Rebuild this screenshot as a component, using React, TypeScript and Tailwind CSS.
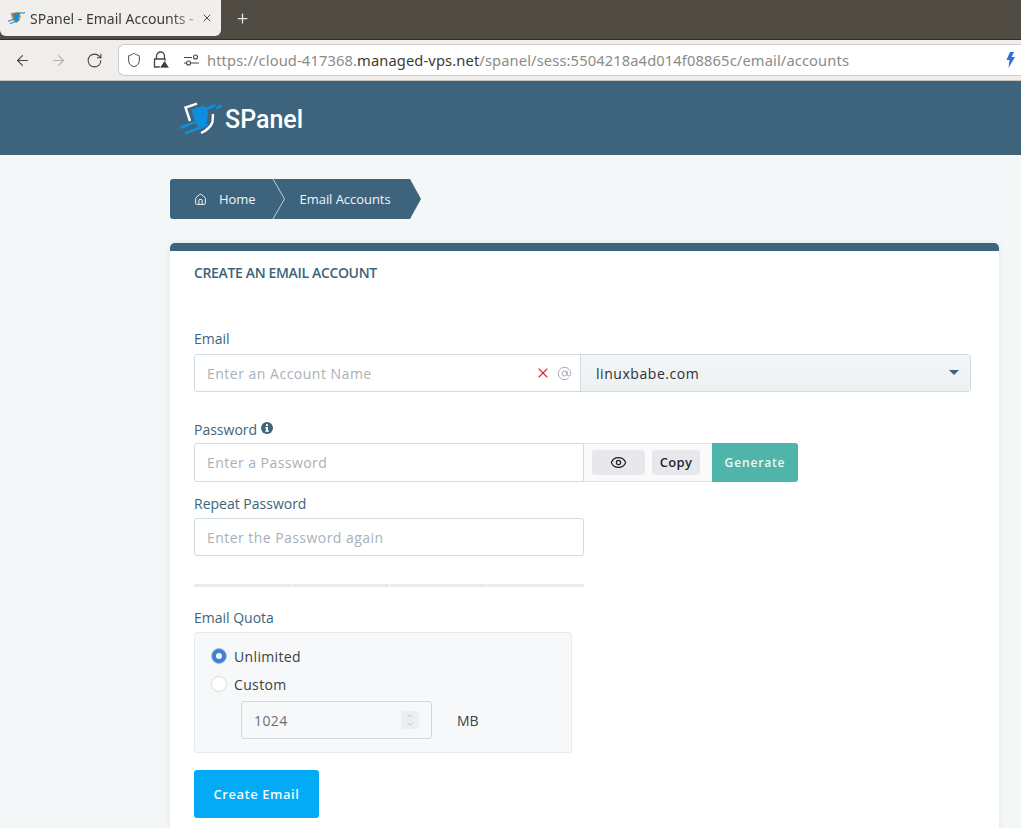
import React from 'react';
import { ArrowLeft, ArrowRight, RotateCw, Shield, X, Plus, Eye, AtSign, ChevronUp, ChevronDown, Home } from 'lucide-react';

const Logo = ({ width, favicon }: { width: number; favicon?: boolean }) => (
  <svg width={width} height={width * 33 / 42} viewBox="0 0 42 33" fill="none">
    {favicon && <path d="M6 5 L28 2 L32 14 Q30 24 21 30 Q12 26 9 16 Z" fill="#f08a2c" />}
    {!favicon && <path d="M10 19 L5.5 5.5 L17 1.7 M33 12 L32.5 20 Q30 27 21 31" stroke="#ffffff" strokeWidth="2.4" fill="none" />}
    <path d="M11.5 7.5 L24 3.5 L28 10 L27 20 Q24.5 25 19 27.5 L15 19 Z" fill="#0d8fdc" />
    <path d="M22 9 L34 3.5" stroke="#0d8fdc" strokeWidth="2.8" strokeLinecap="round" />
    <path d="M37 6 L41 4" stroke="#0d8fdc" strokeWidth="2.8" strokeLinecap="round" />
    <path d="M1 25.5 L20 18" stroke="#0d8fdc" strokeWidth="2.8" strokeLinecap="round" />
    <path d="M6 31 L27 23" stroke="#0d8fdc" strokeWidth="2.8" strokeLinecap="round" />
  </svg>
);

const BrowserChrome = () => (
  <div className="font-['Noto_Sans',sans-serif]">
    <div className="flex h-10 items-start bg-[#504c43] border-b border-[#2f2d28]">
      <div className="flex h-9 w-[221px] items-center rounded-b-md bg-[#f1efed] pl-2 pr-2">
        <Logo width={17} favicon />
        <span className="ml-[5px] w-[166px] whitespace-nowrap text-[14px] text-[#3d3c38] [mask-image:linear-gradient(to_right,black_84%,rgba(0,0,0,0.35)_100%)]">SPanel - Email Accounts -</span>
        <X size={12} className="ml-auto text-[#4a4946]" />
      </div>
      <Plus size={15} className="ml-[14px] mt-[11px] text-[#e8e6e3]" />
    </div>
    <div className="flex h-[41px] items-center border-b border-[#c9c5c0] bg-[#f0eeec] pl-[14px]">
      <ArrowLeft size={17} strokeWidth={1.5} className="text-[#46443f]" />
      <ArrowRight size={17} strokeWidth={1.5} className="ml-[19px] text-[#b2b0ad]" />
      <RotateCw size={17} strokeWidth={1.5} className="ml-[19px] text-[#46443f]" />
      <div className="ml-[15px] flex h-[32px] flex-1 items-center rounded-l-md border border-r-0 border-[#d0ccc6] bg-white pl-[7px]">
        <Shield size={16} strokeWidth={1.5} className="text-[#46443f]" />
        <div className="relative ml-[11px] h-[18px] w-[17px]">
          <svg width="17" height="18" viewBox="0 0 17 18" fill="none">
            <path d="M3.5 8 V5 a4 4 0 0 1 8 0 V8 M1.5 8 H12 V16 H1.5 Z" stroke="#46443f" strokeWidth="1.3" />
            <path d="M11.5 9.5 L16.5 17 H6.5 Z" fill="#3b3a36" stroke="#fff" strokeWidth="0.8" />
          </svg>
        </div>
        <svg width="15" height="12" viewBox="0 0 15 12" fill="none" className="ml-[14px]">
          <path d="M0 3.5 H8 M0 9 H2 M7 9 H15" stroke="#46443f" strokeWidth="1.2" />
          <circle cx="11.5" cy="3" r="2" stroke="#46443f" strokeWidth="1.1" />
          <circle cx="4.5" cy="9" r="2" stroke="#46443f" strokeWidth="1.1" />
        </svg>
        <span className="ml-[8px] whitespace-nowrap text-[14.7px] tracking-[0.12px] text-[#8c8b88]">
          https://cloud-417368.<span className="text-[#3c3b37]">managed-vps.net</span>/spanel/sess:5504218a4d014f08865c/email/accounts
        </span>
        <svg width="9" height="16" viewBox="0 0 9 16" className="ml-auto mr-[6px]">
          <path d="M4 0 L8 0 L5.5 5 L9 5 L2.5 16 L3.5 8 L0.5 8 Z" fill="#2f6fd6" />
        </svg>
      </div>
    </div>
  </div>
);

const Label = ({ children }: { children: React.ReactNode }) => (
  <label className="block text-[14px] leading-5 text-[#3d647c]">{children}</label>
);

const App = () => {
  return (
    <div className="h-[828px] w-[1021px] overflow-hidden bg-[#f4f7f8] font-['Open_Sans',sans-serif]">
      <BrowserChrome />

      <div className="flex h-[74px] items-center bg-[#3d647c] pl-[180px]">
        <Logo width={42} />
        <span className="ml-[3px] mt-[2px] font-['Roboto',sans-serif] text-[25px] font-medium leading-none text-white">SPanel</span>
      </div>

      <div className="pl-[170px] pr-[22px] pt-6">
        <div className="relative flex h-10 w-[251px] items-center rounded-l-[3px] bg-[#3d647c] pt-[1px] text-[13px] tracking-[-0.05px] text-[#f1f5f7] [clip-path:polygon(0_0,240px_0,251px_50%,240px_100%,0_100%)]">
          <Home size={13} strokeWidth={1.8} className="ml-6" />
          <span className="ml-[12px]">Home</span>
          <svg width="14" height="40" viewBox="0 0 14 40" fill="none" className="absolute left-[102px] top-0">
            <path d="M1 0 L12.5 20 L1 40" stroke="#dfe7ec" strokeWidth="0.8" />
          </svg>
          <span className="ml-[44px]">Email Accounts</span>
        </div>

        <div className="mt-6 h-[600px] rounded-t-[5px] border-t-8 border-[#3d647c] bg-white px-6 shadow-[0_0_6px_rgba(0,0,0,0.08)]">
          <h2 className="pt-[13px] text-[14px] font-semibold leading-[18px] tracking-[-0.35px] text-[#3d647c]">CREATE AN EMAIL ACCOUNT</h2>

          <div className="mt-[47px]">
            <Label>Email</Label>
            <div className="mt-[5px] flex h-[38px] w-[777px] rounded-[3px] border border-[#cfdce3] text-[14px]">
              <div className="flex w-[386px] items-center border-r border-[#cfdce3] pl-3 pr-[8px]">
                <span className="tracking-[0.5px] text-[#a8b1b9]">Enter an Account Name</span>
                <X size={16} strokeWidth={1.7} className="ml-auto text-[#e0242c]" />
                <AtSign size={15} strokeWidth={1.6} className="ml-[6px] text-[#a4acb8]" />
              </div>
              <div className="relative flex flex-1 items-center bg-gradient-to-b from-[#f3f6f7] to-[#edf1f3] pl-[15px] text-[#2c2f33]">
                <span className="tracking-[0.55px]">linuxbabe.com</span>
                <span className="absolute right-[11px] top-[15px] h-0 w-0 border-x-[5px] border-t-[5px] border-x-transparent border-t-[#3d647c]" />
              </div>
            </div>
          </div>

          <div className="mt-[28px]">
            <div className="flex items-center">
              <Label>Password</Label>
              <svg width="12" height="12" viewBox="0 0 12 12" className="ml-[4px] mt-[-4px]">
                <circle cx="6" cy="6" r="6" fill="#3d647c" />
                <rect x="5" y="2.2" width="2" height="1.9" fill="#fff" />
                <path d="M4.2 5 H7 V8.6 H8 V9.8 H4.2 V8.6 H5 V6.2 H4.2 Z" fill="#fff" />
              </svg>
            </div>
            <div className="mt-[3px] flex h-[39px] w-[604px]">
              <div className="flex w-[390px] items-center rounded-l-[3px] border border-[#cfdce3] pl-3 text-[14px] tracking-[0.45px] text-[#a8b1b9]">Enter a Password</div>
              <div className="flex w-[128px] items-center border-y border-[#dfe3ea] bg-[#fafafa] pl-2">
                <span className="flex h-[25px] w-[53px] items-center justify-center rounded-[3px] bg-[#e8e8ec]">
                  <Eye size={17} strokeWidth={1.7} className="text-[#1d1d22]" />
                </span>
                <span className="ml-[7px] flex h-[25px] w-12 items-center justify-center rounded-[3px] bg-[#e8e8ec] text-[13px] font-semibold tracking-[0.3px] text-[#26262b]">Copy</span>
              </div>
              <button className="flex-1 rounded-r-[3px] bg-[#4fb5aa] text-[12px] font-semibold tracking-[0.85px] text-[#eef8f6]">Generate</button>
            </div>
          </div>

          <div className="mt-3">
            <Label>Repeat Password</Label>
            <div className="mt-1 flex h-[38px] w-[390px] items-center rounded-[3px] border border-[#cfdce3] pl-3 text-[14px] tracking-[0.45px] text-[#a8b1b9]">Enter the Password again</div>
          </div>

          <div className="mt-7 grid h-[3px] w-[390px] grid-cols-4 gap-[1px]">
            <div className="bg-[#e7ebee]" />
            <div className="bg-[#e7ebee]" />
            <div className="bg-[#e7ebee]" />
            <div className="bg-[#e7ebee]" />
          </div>

          <div className="mt-[21px]">
            <Label>Email Quota</Label>
            <div className="mt-[4px] h-[121px] w-[378px] rounded-[3px] border border-[#e4eaed] bg-[#f6f8fa] pl-[16px] pt-[13px] text-[14px] text-[#3b3f44]">
              <div className="flex h-5 items-center">
                <span className="flex h-4 w-4 items-center justify-center rounded-full border border-[#a9c3de] bg-[#3f7fd3]">
                  <span className="h-[6px] w-[6px] rounded-full bg-white" />
                </span>
                <span className="ml-[7px] tracking-[0.35px]">Unlimited</span>
              </div>
              <div className="mt-2 flex h-5 items-center">
                <span className="h-4 w-4 rounded-full border border-[#d8e2da] bg-white" />
                <span className="ml-[7px] tracking-[0.35px]">Custom</span>
              </div>
              <div className="ml-[30px] mt-[7px] flex items-center">
                <div className="flex h-[38px] w-[191px] items-center rounded-[3px] border border-[#cddbe0] pl-[12px] pr-[12px] text-[#6a6f75]">
                  <span className="tracking-[0.4px]">1024</span>
                  <span className="ml-auto flex h-[18px] w-[18px] flex-col items-center justify-center bg-[#eeeff0] text-[#b4b7ba]">
                    <ChevronUp size={10} strokeWidth={2} className="mb-[-1px]" />
                    <ChevronDown size={10} strokeWidth={2} className="mt-[-1px]" />
                  </span>
                </div>
                <span className="ml-[25px]">MB</span>
              </div>
            </div>
          </div>

          <button className="mt-[17px] h-12 w-[125px] rounded-[3px] bg-[#03abf7] pt-[1px] text-[13px] font-semibold tracking-[0.55px] text-[#f2fbff]">Create Email</button>
        </div>
      </div>
    </div>
  );
};

export default App;
